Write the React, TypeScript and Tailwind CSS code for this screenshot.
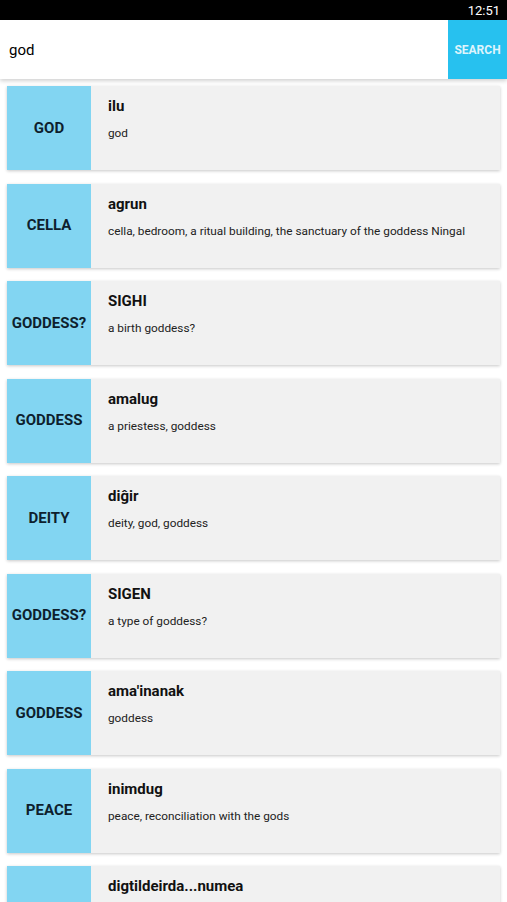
import React from 'react'

/* ── Results ──────────────────────────────────────────────────── */
const RESULTS = [
  { label: 'GOD', word: 'ilu', meaning: 'god' },
  { label: 'CELLA', word: 'agrun', meaning: 'cella, bedroom, a ritual building, the sanctuary of the goddess Ningal' },
  { label: 'GODDESS?', word: 'SIGHI', meaning: 'a birth goddess?' },
  { label: 'GODDESS', word: 'amalug', meaning: 'a priestess, goddess' },
  { label: 'DEITY', word: 'diĝir', meaning: 'deity, god, goddess' },
  { label: 'GODDESS?', word: 'SIGEN', meaning: 'a type of goddess?' },
  { label: 'GODDESS', word: "ama'inanak", meaning: 'goddess' },
  { label: 'PEACE', word: 'inimdug', meaning: 'peace, reconciliation with the gods' },
  { label: '', word: 'digtildeirda...numea', meaning: '' },
]

export default function App() {
  return (
    <div className="w-[507px] h-[902px] overflow-hidden bg-white flex flex-col" style={{ fontFamily: 'Roboto, "Noto Sans", sans-serif' }}>
      {/* status bar */}
      <div className="h-[20px] bg-black flex items-center justify-end pr-[7px] shrink-0">
        <span className="text-white text-[13px] leading-none">12:51</span>
      </div>

      {/* search bar */}
      <div className="h-[59px] flex shrink-0 bg-white relative z-10 shadow-[0_2px_4px_rgba(0,0,0,0.18)]">
        <div className="flex-1 flex items-center pl-[9px] pt-[2px] text-[15px] text-black">god</div>
        <div className="w-[59px] bg-[#27c1ef] flex items-center justify-center text-[12px] font-bold text-[#dff4fc]">
          SEARCH
        </div>
      </div>

      {/* result cards */}
      <div className="flex-1 pt-[7px] px-[7px] flex flex-col">
        {RESULTS.map((r, i) => (
          <div
            key={i}
            className="h-[84px] mb-[13.5px] shrink-0 flex bg-[#f1f1f1] w-[493px] shadow-[0_1px_3px_rgba(0,0,0,0.22)]"
          >
            <div className="w-[84px] bg-[#82d5f2] flex items-center justify-center text-[15px] font-bold text-[#0e1f2e]">
              {r.label}
            </div>
            <div className="flex-1 pl-[17px] pt-[11px]">
              <div className="text-[15px] font-bold text-[#111] leading-[18px]">{r.word}</div>
              <div className="text-[11.8px] text-[#222] mt-[11px] leading-[14px]">{r.meaning}</div>
            </div>
          </div>
        ))}
      </div>
    </div>
  )
}
